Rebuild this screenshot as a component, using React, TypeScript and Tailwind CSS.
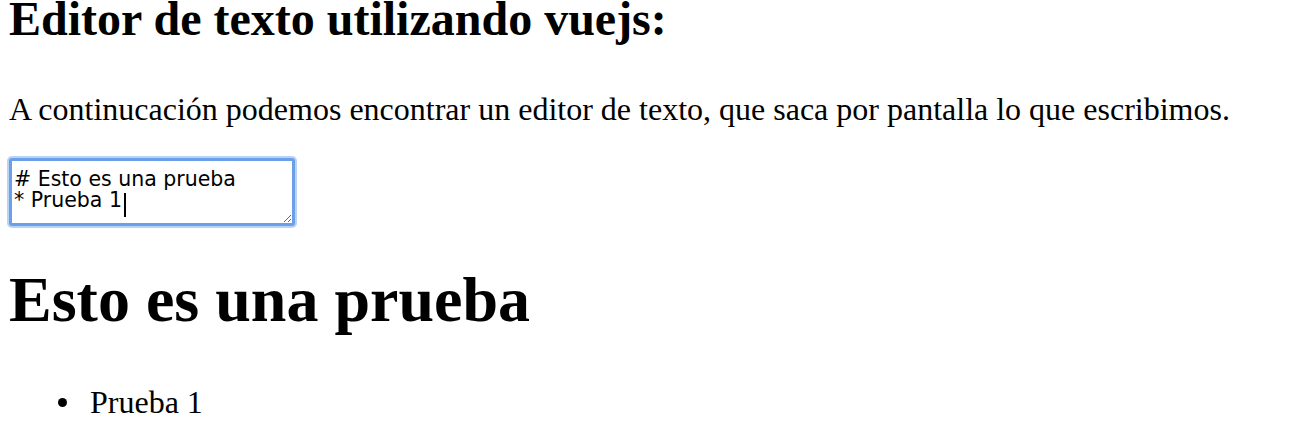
import { useState } from "react"

export default function App() {
    const [texto, setTexto] = useState("# Esto es una prueba\n* Prueba 1")

    return (
        <div className="min-h-screen bg-white pl-[9px] text-black font-['Liberation_Serif',serif]">
            <h2 className="text-[48px] font-bold leading-[38px]">Editor de texto utilizando vuejs:</h2>

            <p className="mt-[53px] text-[32px] leading-[36px]">
                A continucación podemos encontrar un editor de texto, que saca por pantalla lo que escribimos.
            </p>

            {/* textarea con foco */}
            <div className="relative mt-[31px] w-fit">
                <textarea
                    value={texto}
                    onChange={(e) => setTexto(e.target.value)}
                    spellCheck={false}
                    className="block h-[68px] w-[286px] rounded-[3px] border-[3px] border-[#6b9fe8] bg-white pl-[2px] pt-[8px] font-['DejaVu_Sans',sans-serif] text-[20.5px] leading-[21px] text-black shadow-[0_0_0_2px_#b9d3f6] outline-none"
                />
                <span className="absolute left-[115px] top-[35px] h-[24px] w-[2px] bg-black" />
            </div>

            {/* salida */}
            <h1 className="mt-[42px] text-[64px] font-bold leading-[64px]">Esto es una prueba</h1>
            <ul className="mt-[52px]">
                <li className="flex items-start text-[32px] leading-[36px]">
                    <span className="ml-[49px] mt-[14px] h-[9px] w-[9px] rounded-full bg-black" />
                    <span className="ml-[23px]">Prueba 1</span>
                </li>
            </ul>
        </div>
    )
}
